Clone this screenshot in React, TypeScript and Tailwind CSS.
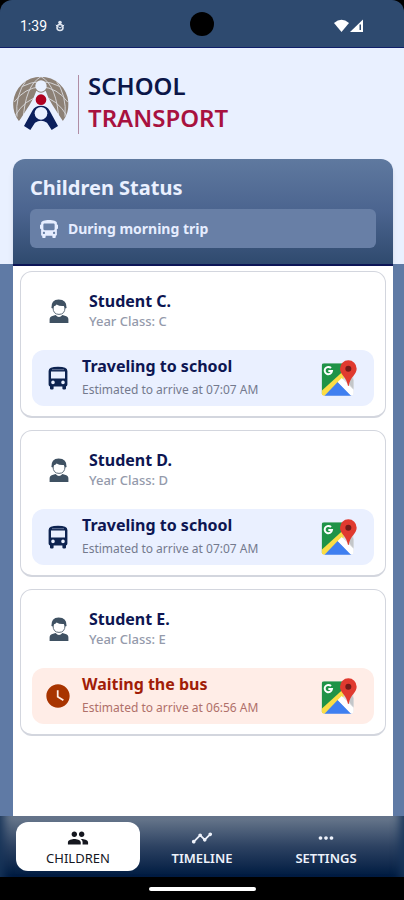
import { useState } from "react";
import type { ComponentType } from "react";
import clsx from "clsx";
import { FaBus } from "react-icons/fa";
import { MdMoreHoriz, MdPeople, MdTimeline, MdWatchLater } from "react-icons/md";

interface Student {
  id: string;
  name: string;
  yearClass: string;
  status: "traveling" | "waiting";
  eta: string;
}

const students: Student[] = [
  { id: "c", name: "Student C.", yearClass: "C", status: "traveling", eta: "07:07 AM" },
  { id: "d", name: "Student D.", yearClass: "D", status: "traveling", eta: "07:07 AM" },
  { id: "e", name: "Student E.", yearClass: "E", status: "waiting", eta: "06:56 AM" },
];

const tabs: { label: string; Icon: ComponentType<{ className?: string }> }[] = [
  { label: "CHILDREN", Icon: MdPeople },
  { label: "TIMELINE", Icon: MdTimeline },
  { label: "SETTINGS", Icon: MdMoreHoriz },
];

function Logo() {
  return (
    <svg viewBox="0 0 168 164" className="h-14 w-14 shrink-0">
      <clipPath id="globe">
        <path d="M18 134 A83 83 0 1 1 149 134 L83 60 Z" />
      </clipPath>
      <g clipPath="url(#globe)">
        <rect width="168" height="164" fill="#8d8176" />
        <g fill="none" stroke="#d3d3d6" strokeWidth="3">
          <path d="M26 30 Q84 0 142 30" />
          <path d="M4 76 Q34 34 84 30 Q134 34 164 76" />
          <path d="M6 118 Q34 68 84 58 Q134 68 162 118" />
          <path d="M84 0 Q36 26 30 134" />
          <path d="M84 0 Q132 26 138 134" />
          <path d="M40 10 Q6 56 12 120" />
          <path d="M128 10 Q162 56 156 120" />
        </g>
      </g>
      <path
        d="M70 42 Q84 54 98 42 Q104 62 118 84 L150 134 L118 164 H50 L18 134 L50 84 Q64 62 70 42 Z"
        fill="#e9f0ff"
      />
      <circle cx="84" cy="28" r="17" fill="#e9f0ff" />
      <circle cx="84" cy="69" r="16" fill="#b00020" />
      <path
        d="M84 87 Q102 87 110 102 L135 148 L116 160 L102 138 Q84 126 66 138 L52 160 L33 148 L58 102 Q66 87 84 87 Z"
        fill="#0b1f5c"
      />
      <circle cx="84" cy="110" r="19" fill="#e9f0ff" />
    </svg>
  );
}

function StudentIcon() {
  return (
    <svg viewBox="0 0 20 24" className="h-6 w-5 shrink-0">
      <path
        d="M4 8.4 V6.6 Q4 1.8 10 1.8 Q16 1.8 16 6.6 V8.4 Q16 15.4 10 15.4 Q4 15.4 4 8.4 Z"
        fill="#fff"
        stroke="#5c6b78"
      />
      <path
        d="M2.4 9 Q2 .6 9.6 .4 Q18 .6 17.6 9 L16 9.4 L14.8 7 Q10.4 7.4 7.6 5.4 Q6.4 7 5 7.2 L4.2 9.4 Z"
        fill="#3f5162"
      />
      <path
        d="M.6 24 V20.4 Q.6 17.6 3.4 17 L6.6 16 Q10 20 13.4 16 L16.6 17 Q19.4 17.6 19.4 20.4 V24 Z"
        fill="#3f5162"
      />
    </svg>
  );
}

function BusIcon() {
  return (
    <svg viewBox="0 0 20 24" className="h-6 w-5 shrink-0">
      <path
        fillRule="evenodd"
        d="M.6 5 Q.6 .8 10 .8 Q19.4 .8 19.4 5 V18.6 Q19.4 20 18 20.4 V22.4 Q18 23.4 16.8 23.4 H15.6 Q14.4 23.4 14.4 22.4 V20.6 H5.6 V22.4 Q5.6 23.4 4.4 23.4 H3.2 Q2 23.4 2 22.4 V20.4 Q.6 20 .6 18.6 Z M3 5.6 V12.4 H17 V5.6 Z M5 14.6 A1.8 1.8 0 1 0 5 18.2 A1.8 1.8 0 1 0 5 14.6 Z M15 14.6 A1.8 1.8 0 1 0 15 18.2 A1.8 1.8 0 1 0 15 14.6 Z"
        fill="#0d2350"
      />
      <path d="M4 3.7 H16" stroke="#7f8cab" strokeWidth=".8" />
    </svg>
  );
}

function MapsIcon() {
  return (
    <svg viewBox="0 0 108 108" className="h-9 w-9">
      <clipPath id="mapTile">
        <rect x="2" y="10" width="96" height="97" rx="7" />
      </clipPath>
      <g clipPath="url(#mapTile)">
        <rect x="2" y="10" width="96" height="97" fill="#dcdee0" />
        <path d="M2 10 H72 V40 L2 106 Z" fill="#1f9347" />
        <path d="M2 92 L64 36 L76 48 L10 108 H2 Z" fill="#fbdd45" />
        <path d="M10 108 L50 66 L92 108 Z" fill="#3f7ff0" />
        <path d="M50 66 L62 54 L98 90 V107 H90 Z" fill="#fff" />
        <path d="M66 50 L84 40 L98 60 V88 Z" fill="#c3c6c9" />
      </g>
      <path
        d="M30 24 A11 11 0 1 0 33 33 H22"
        fill="none"
        stroke="#fff"
        strokeWidth="6"
      />
      <path
        d="M82 1 A25 25 0 0 1 107 26 C107 44 87 50 83 78 H81 C77 50 57 44 57 26 A25 25 0 0 1 82 1 Z"
        fill="#e03a2f"
      />
      <circle cx="82" cy="26" r="9" fill="#741a18" />
    </svg>
  );
}

function StatusBar() {
  return (
    <div className="bg-black">
      <div className="relative flex h-12 items-center justify-between rounded-t-xl border-b border-[#10206a] bg-[#2e4a6f] pt-1 pr-10 pl-5 text-white">
        <div className="flex items-center gap-2">
          <span className="font-[Roboto] text-[14px] leading-5">1:39</span>
          <svg viewBox="0 0 10 12" className="h-3 w-2.5">
            <circle cx="5" cy="2.6" r="1.8" fill="#dfe6f0" />
            <circle cx="5" cy="7.5" r="3" fill="none" stroke="#dfe6f0" strokeWidth="1.6" />
            <path d="M.8 5 L5 8 L9.2 5" fill="none" stroke="#dfe6f0" />
          </svg>
        </div>
        <div className="absolute top-3 left-1/2 h-6 w-6 -translate-x-1/2 rounded-full bg-black" />
        <svg viewBox="0 0 30 14" className="h-3.5 w-[30px]">
          <path d="M0 4 Q7.5 -2.5 15 4 L7.5 13 Z" fill="#fff" />
          <path d="M29 .6 V13 H16 Z" fill="#fff" />
          <path d="M25.5 5.5 H27 V11 H25.5 Z" fill="#2e4a6f" />
        </svg>
      </div>
    </div>
  );
}

function StudentCard({ student }: { student: Student }) {
  const waiting = student.status === "waiting";

  return (
    <li className="rounded-xl border border-b-2 border-[#d3d6de] bg-white px-[11px] pb-2.5">
      <div className="flex h-[78px] items-center gap-5 pl-[17px]">
        <StudentIcon />
        <div>
          <h2 className="text-[16px] leading-5 font-bold text-[#0d1652]">{student.name}</h2>
          <p className="text-[13px] leading-5 font-medium text-[#949aab]">
            Year Class: {student.yearClass}
          </p>
        </div>
      </div>
      <div
        className={clsx(
          "flex h-14 items-center rounded-xl pr-[17px] pl-3",
          waiting ? "bg-[#ffede7]" : "bg-[#eaf0ff]"
        )}
      >
        <div className="flex w-7 shrink-0 justify-center">
          {waiting ? <MdWatchLater className="h-7 w-7 text-[#a83400]" /> : <BusIcon />}
        </div>
        <div className="ml-2.5 flex-1">
          <p
            className={clsx(
              "text-[16px] leading-5 font-bold",
              waiting ? "text-[#a11d08]" : "text-[#0d1652]"
            )}
          >
            {waiting ? "Waiting the bus" : "Traveling to school"}
          </p>
          <p
            className={clsx(
              "mt-1 text-[12px] leading-5",
              waiting ? "text-[#b0706a]" : "text-[#747a8e]"
            )}
          >
            Estimated to arrive at {student.eta}
          </p>
        </div>
        <button type="button" aria-label={`Open map for ${student.name}`}>
          <MapsIcon />
        </button>
      </div>
    </li>
  );
}

export default function App() {
  const [activeTab, setActiveTab] = useState<string>("CHILDREN");

  return (
    <div className="flex min-h-screen flex-col bg-[#5f7aa5] font-['Noto_Sans',sans-serif]">
      <StatusBar />
      <header className="bg-[#e9f0ff] pt-[26px] pr-[11px] pl-[13px]">
        <div className="flex h-[60px] items-center gap-[9px]">
          <Logo />
          <div className="h-[59px] w-px bg-[#b08da5]" />
          <p className="pb-1 text-[24px] leading-8 font-semibold text-[#0b1648]">
            SCHOOL
            <br />
            <span className="text-[#a8123f]">TRANSPORT</span>
          </p>
        </div>
        <div className="mt-[25px] rounded-t-xl bg-linear-to-b from-[#5f799f] via-[#4b648f] to-[#2f4a6e] px-[17px] pt-4 pb-4 shadow-md">
          <h1 className="text-[20px] leading-[26px] font-bold text-[#eaf0ff]">Children Status</h1>
          <div className="mt-2 flex h-[39px] items-center gap-2.5 rounded-md bg-[#687fa6] px-2.5 text-[#e6edff]">
            <FaBus className="h-[18px] w-[18px]" />
            <span className="text-[14px] leading-5 font-bold">During morning trip</span>
          </div>
        </div>
      </header>
      <main className="mr-[11px] ml-[13px] flex-1 border-t-2 border-[#0c1556] bg-white px-[7px] pt-[5px] pb-3">
        <ul className="flex flex-col gap-3">
          {students.map((student) => (
            <StudentCard key={student.id} student={student} />
          ))}
        </ul>
      </main>
      <nav className="grid grid-cols-3 bg-linear-to-b from-[#6b7a8e] via-[#2d4262] to-[#001a40] px-4 py-1.5 shadow-[inset_12px_0_10px_-8px_#173459,inset_-12px_0_10px_-8px_#173459]">
        {tabs.map(({ label, Icon }) => (
          <button
            key={label}
            type="button"
            onClick={() => setActiveTab(label)}
            className={clsx(
              "flex h-[49px] flex-col items-center justify-center rounded-xl",
              activeTab === label ? "bg-white text-[#15171f]" : "text-[#eef2fb]"
            )}
          >
            <Icon className="h-[22px] w-[22px]" />
            <span
              className={clsx(
                "text-[13px] leading-[18px]",
                activeTab === label ? "font-normal" : "font-semibold"
              )}
            >
              {label}
            </span>
          </button>
        ))}
      </nav>
      <div className="flex h-[23px] items-center justify-center bg-black">
        <div className="h-1 w-[107px] rounded-full bg-white" />
      </div>
    </div>
  );
}
